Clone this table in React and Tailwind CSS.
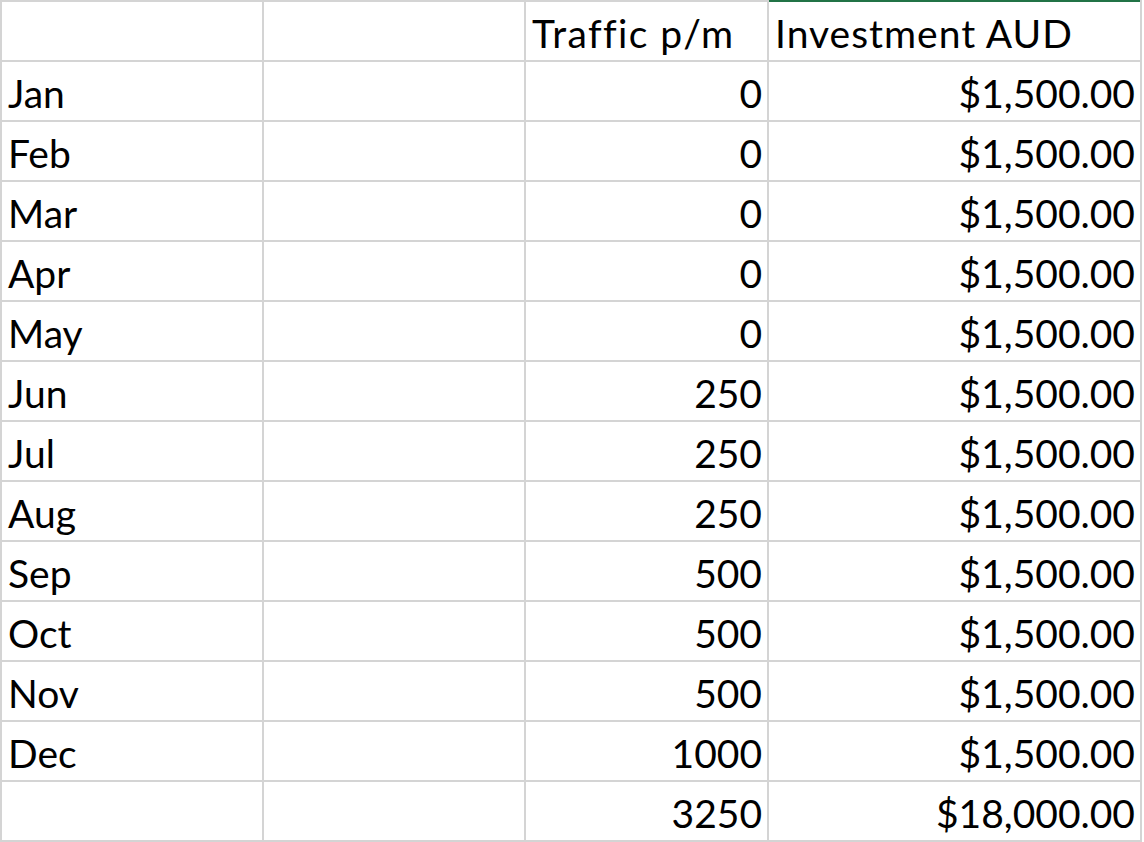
const rows = [
  ["Jan", "0", "$1,500.00"],
  ["Feb", "0", "$1,500.00"],
  ["Mar", "0", "$1,500.00"],
  ["Apr", "0", "$1,500.00"],
  ["May", "0", "$1,500.00"],
  ["Jun", "250", "$1,500.00"],
  ["Jul", "250", "$1,500.00"],
  ["Aug", "250", "$1,500.00"],
  ["Sep", "500", "$1,500.00"],
  ["Oct", "500", "$1,500.00"],
  ["Nov", "500", "$1,500.00"],
  ["Dec", "1000", "$1,500.00"],
  ["", "3250", "$18,000.00"],
];

function Cell({ children, right, top }) {
  return (
    <div
      className={`bg-white h-[58px] flex items-end pb-[7px] leading-[39px] whitespace-nowrap ${
        right ? "justify-end pr-[5px]" : "pl-[6px]"
      } ${top || ""}`}
    >
      {children}
    </div>
  );
}

export default function App() {
  return (
    <div className="w-[1144px] h-[842px] bg-white overflow-hidden">
      <div
        className="w-[1142px] bg-[#d4d4d4] grid grid-cols-[260px_260px_241px_371px] gap-[2px] px-[2px] pb-[2px] text-[39px] text-black [font-variant-ligatures:none]"
        style={{ fontFamily: "Lato, 'Liberation Sans', sans-serif" }}
      >
        <Cell top="border-t-2 border-[#d4d4d4] h-[60px]" />
        <Cell top="border-t-2 border-[#d4d4d4] h-[60px]" />
        <Cell top="border-t-2 border-[#d4d4d4] h-[60px] tracking-[1.4px]">Traffic p/m</Cell>
        <Cell top="border-t-2 border-[#217346] h-[60px] tracking-[1px]">Investment AUD</Cell>
        {rows.map((r, i) => (
          <div key={i} className="contents">
            <Cell>{r[0]}</Cell>
            <Cell />
            <Cell right>{r[1]}</Cell>
            <Cell right>{r[2]}</Cell>
          </div>
        ))}
      </div>
    </div>
  );
}
